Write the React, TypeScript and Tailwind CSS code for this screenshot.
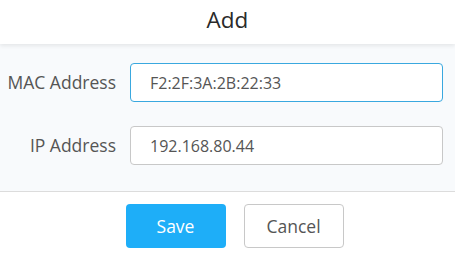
export default function App() {
  return (
    <div className="flex h-[257px] w-[455px] flex-col bg-white font-['Open_Sans',sans-serif]">
      <header className="relative z-10 flex h-[44px] shrink-0 items-center justify-center bg-white pb-[4px] shadow-[0_2px_4px_rgba(0,0,0,0.08)]">
        <h1 className="text-[22.5px] text-[#2a2a2a]">Add</h1>
      </header>
      <div className="flex h-[147px] shrink-0 flex-col gap-[24px] bg-[#f8fafc] pt-[19px] pr-[12px]">
        <div className="flex items-center">
          <label className="w-[116px] text-right text-[17.5px] text-[#555]">MAC Address</label>
          <input
            className="ml-[14px] h-[39px] flex-1 rounded-[4px] border border-[#3aa8df] bg-white pl-[19px] text-[16px] text-[#555] outline-none"
            defaultValue="F2:2F:3A:2B:22:33"
          />
        </div>
        <div className="flex items-center">
          <label className="w-[116px] text-right text-[17.5px] text-[#555]">IP Address</label>
          <input
            className="ml-[14px] h-[39px] flex-1 rounded-[4px] border border-[#c8c8c8] bg-white pl-[19px] text-[16px] text-[#555] outline-none"
            defaultValue="192.168.80.44"
          />
        </div>
      </div>
      <footer className="flex flex-1 items-start justify-center gap-[18px] border-t border-[#dcdcdc] pt-[12px] pl-[14px]">
        <button className="h-[44px] w-[100px] rounded-[4px] bg-[#1eaef8] text-[17.5px] text-white">Save</button>
        <button className="h-[44px] w-[100px] rounded-[4px] border border-[#c8c8c8] bg-white text-[17.5px] text-[#555]">
          Cancel
        </button>
      </footer>
    </div>
  );
}
